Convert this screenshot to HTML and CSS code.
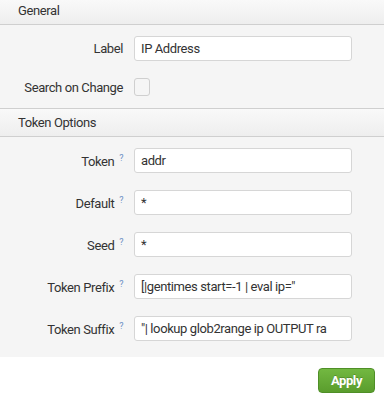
FILE: index.html
```html
<!DOCTYPE html>
<html lang="en">
  <head>
    <meta charset="UTF-8" />
    <meta name="viewport" content="width=device-width, initial-scale=1.0" />
    <title>Input settings</title>
    <link rel="stylesheet" href="styles.css">
  </head>
  <body>
    <div class="panel">
      <div class="section-header first">General</div>
      <div class="section-body">
        <div class="form-row">
          <label for="label">Label</label>
          <input type="text" id="label" value="IP Address" />
        </div>
        <div class="form-row">
          <label for="search-change">Search on Change</label>
          <span class="checkbox" id="search-change"></span>
        </div>
      </div>

      <div class="section-header">Token Options</div>
      <div class="section-body tokens">
        <div class="form-row">
          <label for="token">Token <sup>?</sup></label>
          <input type="text" id="token" value="addr" />
        </div>
        <div class="form-row">
          <label for="default">Default <sup>?</sup></label>
          <input type="text" id="default" value="*" />
        </div>
        <div class="form-row">
          <label for="seed">Seed <sup>?</sup></label>
          <input type="text" id="seed" value="*" />
        </div>
        <div class="form-row">
          <label for="prefix">Token Prefix <sup>?</sup></label>
          <input type="text" id="prefix" value='[|gentimes start=-1 | eval ip="' />
        </div>
        <div class="form-row">
          <label for="suffix">Token Suffix <sup>?</sup></label>
          <input type="text" id="suffix" value='"| lookup glob2range ip OUTPUT ra' />
        </div>
      </div>
    </div>

    <div class="footer">
      <button type="button" class="apply">Apply</button>
    </div>
  </body>
</html>
```

FILE: styles.css
```css
body {
  font-family: Roboto, "Helvetica Neue", Arial, sans-serif;
  font-size: 13px;
  letter-spacing: -0.4px;
  color: #333;
  background-color: #fff;
  margin: 0;
  padding: 0;
}
.panel {
  background-color: #f5f5f5;
}
.section-header {
  height: 27px;
  line-height: 27px;
  padding-left: 18px;
  color: #333;
  background: linear-gradient(#f9f9f9, #eeeeee);
  border-top: 1px solid #cfcfcf;
  border-bottom: 1px solid #cfcfcf;
}
.section-header.first {
  height: 24px;
  line-height: 22px;
  border-top: none;
}
.section-body {
  padding: 11px 0 12px;
  display: flex;
  flex-direction: column;
  gap: 17px;
}
.section-body.tokens {
  padding-top: 11px;
  padding-bottom: 16px;
}
.form-row {
  display: flex;
  align-items: center;
}
.form-row label {
  width: 123px;
  margin-right: 11px;
  text-align: right;
  color: #333;
}
.form-row label sup {
  font-size: 9px;
  color: #6a8fc4;
  vertical-align: 5px;
  margin-left: 2px;
}
.form-row input {
  box-sizing: border-box;
  width: 218px;
  height: 25px;
  padding: 0 6px;
  border: 1px solid #d6d6d6;
  border-radius: 3px;
  background-color: #fff;
  font-family: inherit;
  font-size: 13px;
  letter-spacing: -0.4px;
  color: #333;
}
.checkbox {
  box-sizing: border-box;
  width: 16px;
  height: 18px;
  border: 1px solid #cfcfcf;
  border-radius: 3px;
  background-color: #f5f5f5;
}
.footer {
  display: flex;
  justify-content: flex-end;
  padding: 11px 9px 0 0;
}
.apply {
  width: 57px;
  height: 25px;
  border: 1px solid #4f8f27;
  border-radius: 4px;
  background: linear-gradient(#72b841, #5a9d2d);
  color: #fff;
  font-family: inherit;
  font-size: 13px;
  font-weight: bold;
  letter-spacing: -0.4px;
  text-shadow: 0 -1px 0 rgba(0, 0, 0, 0.2);
  cursor: pointer;
}
```
